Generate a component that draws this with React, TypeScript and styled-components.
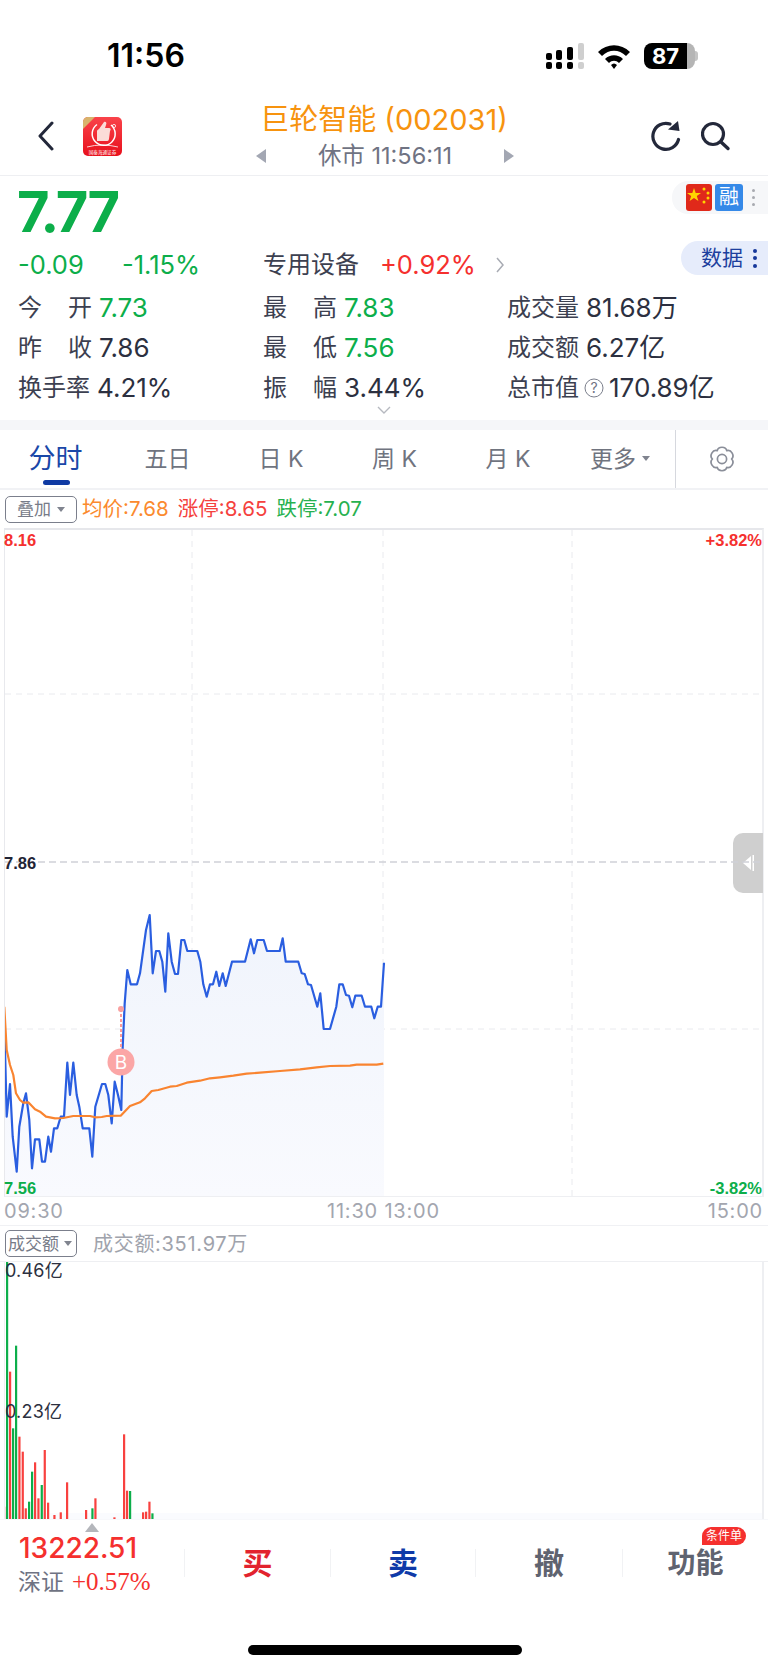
import React from "react";
import styled, { createGlobalStyle } from "styled-components";

const FONT = `"Inter", "Liberation Sans", "Noto Sans CJK SC", sans-serif`;
const UP = "#f5302e";
const DOWN = "#0cae4a";
const TEXT = "#2c3040";
const GREY = "#6f7383";

const Global = createGlobalStyle`
  html, body { margin: 0; padding: 0; background: #fff; }
  body { font-family: ${FONT}; }
`;

const Page = styled.div`
  width: 768px;
  height: 1669px;
  overflow: hidden;
  position: relative;
  background: #fff;
  display: flex;
  flex-direction: column;
`;

const StatusBar = styled.div`
  height: 97px;
  padding: 36px 73px 0 107px;
  box-sizing: border-box;
  display: flex;
  justify-content: space-between;
  align-items: flex-start;
`;
const Clock = styled.div`
  font: 600 32px/40px "Inter", sans-serif;
  color: #000;
`;
const StatusIcons = styled.div`
  display: flex;
  align-items: center;
  gap: 13px;
  height: 40px;
`;
const Battery = styled.div`
  position: relative;
  width: 51px;
  height: 26px;
  border-radius: 8px;
  background: linear-gradient(90deg, #000 84%, #b5b5b5 84%);
  color: #fff;
  font: 700 22px/26px "Inter", sans-serif;
  text-align: center;
  padding-right: 8px;
  box-sizing: border-box;
  &::after {
    content: "";
    position: absolute;
    right: -3px;
    top: 8px;
    width: 3px;
    height: 10px;
    border-radius: 0 3px 3px 0;
    background: #c4c4c4;
  }
`;

const NavBar = styled.div`
  height: 78px;
  display: grid;
  grid-template-columns: 200px 1fr 200px;
  align-items: center;
  border-bottom: 1px solid #eeeff2;
`;
const NavLeft = styled.div`
  display: flex;
  align-items: center;
  padding-left: 37px;
  gap: 28px;
`;
const NavRight = styled.div`
  display: flex;
  align-items: center;
  justify-content: flex-end;
  padding-right: 37px;
  gap: 20px;
`;
const NavCenter = styled.div`
  display: flex;
  flex-direction: column;
  align-items: center;
`;
const Title = styled.div`
  font: 400 29px/36px ${FONT};
  color: #f7930e;
  white-space: nowrap;
`;
const Session = styled.div`
  display: flex;
  align-items: center;
  gap: 52px;
  font: 400 23.5px/30px ${FONT};
  color: ${GREY};
  margin-top: 3px;
  margin-left: 2px;
`;
const Tri = styled.span<{ $dir: "l" | "r" }>`
  width: 0;
  height: 0;
  border-top: 7px solid transparent;
  border-bottom: 7px solid transparent;
  ${(p) => (p.$dir === "l" ? "border-right: 10px solid #a3a7b3;" : "border-left: 10px solid #a3a7b3;")}
`;

const Quote = styled.div`
  position: relative;
  height: 244px;
  padding: 0 0 0 18px;
  box-sizing: border-box;
`;
const Price = styled.div`
  font: 700 56px/72px ${FONT};
  letter-spacing: -2px;
  color: ${DOWN};
  height: 70px;
  margin-left: -1px;
`;
const ChangeRow = styled.div`
  display: flex;
  align-items: center;
  height: 38px;
  margin-bottom: 4px;
  font: 400 25.5px/38px ${FONT};
`;
const Val = styled.span<{ $c?: string; $w?: number }>`
  color: ${(p) => p.$c || TEXT};
  ${(p) => (p.$w ? `width: ${p.$w}px;` : "")}
  white-space: nowrap;
`;
const Sector = styled.span`
  width: 117px;
  color: #3c4050;
  font-size: 24px;
  white-space: nowrap;
`;
const Stats = styled.div`
  display: grid;
  grid-template-columns: 245px 244px 1fr;
  grid-auto-rows: 40px;
  font: 400 26px/40px ${FONT};
  color: ${TEXT};
`;
const Stat = styled.div`
  display: flex;
  align-items: center;
  gap: 7px;
  white-space: nowrap;
`;
const HelpMark = styled.svg`
  margin: 0 -2px 0 -2px;
`;
const Key = styled.span<{ $spread?: boolean }>`
  color: #3c4050;
  font-size: 24px;
  ${(p) => (p.$spread ? "width: 74px; display: flex; justify-content: space-between;" : "")}
`;
const Tags = styled.div`
  position: absolute;
  left: 672px;
  top: 5px;
  width: 96px;
  height: 33px;
  background: #f6f7f9;
  border-radius: 16px 0 0 16px;
  display: flex;
  align-items: center;
  padding-left: 14px;
  gap: 3px;
  box-sizing: border-box;
`;
const RongTag = styled.span`
  width: 28px;
  height: 27px;
  border-radius: 3px;
  background: #3589e8;
  color: #fff;
  font: 400 20px/27px ${FONT};
  text-align: center;
`;
const DotsV = styled.span<{ $c: string; $s: number; $g: number; $m: number }>`
  display: inline-flex;
  flex-direction: column;
  gap: ${(p) => p.$g}px;
  margin-left: ${(p) => p.$m}px;
  & > i {
    display: block;
    width: ${(p) => p.$s}px;
    height: ${(p) => p.$s}px;
    border-radius: 50%;
    background: ${(p) => p.$c};
  }
`;
const DataBtn = styled.div`
  position: absolute;
  left: 681px;
  top: 65px;
  width: 87px;
  height: 34px;
  background: #e6ecfb;
  border-radius: 17px 0 0 17px;
  display: flex;
  align-items: center;
  padding-left: 20px;
  gap: 3px;
  box-sizing: border-box;
  color: #1d3f9e;
  font: 400 21px/34px ${FONT};
`;
const Chevron = styled.svg`
  position: absolute;
  left: 377px;
  bottom: 6px;
`;
const Gap = styled.div`
  height: 10px;
  background: #f5f6f9;
`;
const Tabs = styled.div`
  height: 58px;
  display: flex;
  border-bottom: 2px solid #f1f2f5;
`;
const TabList = styled.div`
  width: 676px;
  border-right: 1px solid #d6d8de;
  position: relative;
  display: grid;
  grid-template-columns: 111px 113px 114px 113px 114px 110px;
  box-sizing: border-box;
`;
const Tab = styled.div<{ $on?: boolean }>`
  display: flex;
  align-items: center;
  justify-content: center;
  position: relative;
  gap: 6px;
  font: 400 ${(p) => (p.$on ? 27 : 23)}px/30px ${FONT};
  color: ${(p) => (p.$on ? "#1a47a8" : "#70747f")};
  padding-bottom: 1px;
  ${(p) =>
    p.$on
      ? `&::after { content: ""; position: absolute; left: 43px; bottom: 3px; width: 27px; height: 5px; border-radius: 3px; background: #0f3aa3; }`
      : ""}
`;
const Caret = styled.span<{ $c?: string }>`
  width: 0;
  height: 0;
  border-left: 4px solid transparent;
  border-right: 4px solid transparent;
  border-top: 5px solid ${(p) => p.$c || "#80848f"};
`;
const Settings = styled.div`
  flex: 1;
  display: flex;
  align-items: center;
  justify-content: center;
`;
const Legend = styled.div`
  height: 38px;
  display: flex;
  align-items: center;
  padding-left: 5px;
  gap: 9px;
  font: 400 20.5px/26px ${FONT};
`;
const SelectBox = styled.div<{ $pl: number; $pr: number; $g: number }>`
  height: 25px;
  border: 1px solid #7b7f8c;
  border-radius: 5px;
  padding: 0 ${(p) => p.$pr}px 0 ${(p) => p.$pl}px;
  display: flex;
  align-items: center;
  gap: ${(p) => p.$g}px;
  color: #777b88;
  font-size: 17px;
  letter-spacing: 0;
  background: #fff;
  margin-right: -4px;
`;
const LegendItem = styled.span<{ $c: string }>`
  color: ${(p) => p.$c};
  white-space: nowrap;
`;

const ChartArea = styled.div`
  position: relative;
  height: 669px;
  margin-left: 4px;
  border-left: 1px solid #e8e9ed;
  border-right: 2px solid #eeeff2;
  border-top: 2px solid #e6e7eb;
  border-bottom: 1px solid #eeeff2;
  width: 760px;
  box-sizing: border-box;
`;
const Plot = styled.svg`
  display: block;
  position: relative;
`;
const AxisLabel = styled.span<{ $c: string; $x: "l" | "r"; $y: number }>`
  position: absolute;
  ${(p) => (p.$x === "l" ? "left: -1px;" : "right: 0;")}
  top: ${(p) => p.$y}px;
  color: ${(p) => p.$c};
  font: 700 16.5px/18px "Liberation Sans", sans-serif;
`;
const Handle = styled.div`
  position: absolute;
  right: -1px;
  top: 303px;
  width: 30px;
  height: 60px;
  border-radius: 10px 0 0 10px;
  background: #cfcfcf;
  display: flex;
  align-items: center;
  justify-content: flex-start;
  padding-left: 9px;
  box-sizing: border-box;
`;
const TimeRow = styled.div`
  display: flex;
  height: 28px;
  align-items: center;
  padding: 0 5px 0 4px;
  color: #a3a6af;
  font: 400 20px/28px ${FONT};
  letter-spacing: 0.8px;
`;
const TimeLeft = styled.span`
  width: 323px;
`;
const TimeMid = styled.span`
  flex: 1;
`;
const VolHead = styled.div`
  height: 35px;
  display: flex;
  align-items: center;
  padding-left: 5px;
  gap: 20px;
  border-top: 1px solid #f0f1f4;
  border-bottom: 1px solid #eeeff2;
  font: 400 20px/26px ${FONT};
  color: #a0a3ac;
  letter-spacing: 0.7px;
`;
const VolArea = styled.div`
  position: relative;
  height: 257px;
  margin-left: 4px;
  width: 760px;
  border-left: 1px solid #eeeff2;
  border-right: 2px solid #eeeff2;
  box-sizing: border-box;
  background: linear-gradient(180deg, #fff 0, #fff 251px, #fafbfe 251px);
`;
const VolLabel = styled.span<{ $y: number }>`
  position: absolute;
  left: 0;
  top: ${(p) => p.$y}px;
  font: 400 18px/22px ${FONT};
  color: ${TEXT};
  letter-spacing: 0.2px;
`;
const BottomBar = styled.div`
  position: relative;
  flex: 1;
  background: #fff;
  border-top: 1px solid #f7f8fb;
  display: grid;
  grid-template-columns: 184px 146px 145px 147px 146px;
  align-items: start;
`;
const Index = styled.div`
  padding: 11px 0 0 18px;
  position: relative;
`;
const IndexValue = styled.div`
  font: 500 28px/34px "Inter", sans-serif;
  color: ${UP};
  margin-left: 1px;
`;
const IndexSub = styled.div`
  display: flex;
  align-items: baseline;
  gap: 8px;
  font: 400 23px/34px ${FONT};
  color: ${GREY};
`;
const IndexPct = styled.span`
  font: 400 25px/34px "Liberation Serif", serif;
  color: ${UP};
`;
const Pointer = styled.span`
  position: absolute;
  left: 85px;
  top: 3px;
  width: 0;
  height: 0;
  border-left: 7px solid transparent;
  border-right: 7px solid transparent;
  border-bottom: 9px solid #b4b6bb;
`;
const Action = styled.div<{ $c: string; $fs?: number }>`
  position: relative;
  margin-top: 29px;
  height: 28px;
  display: flex;
  align-items: center;
  justify-content: center;
  border-left: 1px solid #f1f2f4;
  color: ${(p) => p.$c};
  font: 700 ${(p) => p.$fs || 30}px/28px ${FONT};
`;
const Badge = styled.span`
  position: absolute;
  right: 22px;
  top: -22px;
  height: 18px;
  padding: 0 4px;
  border-radius: 9px 9px 9px 0;
  background: #f5302e;
  color: #fff;
  font: 400 12px/18px ${FONT};
`;
const HomeBar = styled.div`
  position: absolute;
  left: 248px;
  bottom: 14px;
  width: 274px;
  height: 10px;
  border-radius: 5px;
  background: #000;
`;

/* reference chart traces, read in a 3x crop whose origin is (0,880) of the page */
const BLUE = "14,470 20,710 30,612 38,770 50,875 58,740 70,670 78,640 88,720 96,865 105,778 118,778 126,845 135,845 145,770 153,815 162,745 172,745 182,710 192,710 202,548 210,645 220,548 230,645 238,680 248,745 268,745 277,830 286,680 306,612 316,612 325,645 335,730 344,605 354,645 364,690 368,500 374,370 382,270 392,313 411,313 420,280 438,150 449,105 458,280 468,213 478,213 487,245 496,335 505,160 515,245 525,282 534,282 544,180 553,180 562,213 592,213 601,245 610,313 620,350 630,313 639,313 649,275 658,318 668,280 677,318 696,245 735,245 752,178 762,220 772,180 791,180 801,213 839,213 848,175 857,245 895,245 905,280 914,282 924,313 933,315 952,380 961,340 971,447 990,447 1009,380 1018,313 1028,313 1038,345 1047,347 1057,382 1066,347 1085,347 1095,380 1114,380 1123,415 1133,380 1143,380 1152,248";
const ORANGE = "13,380 20,510 30,555 40,585 48,640 60,660 70,668 85,667 105,688 120,695 138,710 165,715 190,714 220,708 270,708 285,712 305,711 320,708 362,707 390,678 420,667 435,655 455,633 475,630 510,620 530,618 560,608 600,602 630,595 660,592 700,587 740,581 780,578 840,573 900,568 950,562 990,558 1050,557 1070,554 1130,554 1150,551";

const CHART_TOP = 530;
const CHART_LEFT = 5;
const toPts = (s: string) =>
  s
    .split(" ")
    .map((p) => {
      const [x, y] = p.split(",").map(Number);
      return `${(x / 3 - CHART_LEFT).toFixed(1)},${(880 + y / 3 - CHART_TOP).toFixed(1)}`;
    })
    .join(" ");

type Bar = [number, number, "r" | "g"];
const BARS: Bar[] = [
  [12, 920, "r"], [21, 183, "g"], [30, 515, "r"], [39, 685, "g"], [48, 437, "g"], [58, 710, "r"],
  [68, 755, "r"], [77, 925, "r"], [87, 905, "g"], [96, 815, "g"], [105, 787, "r"], [115, 895, "r"],
  [125, 855, "g"], [134, 750, "r"], [144, 908, "r"], [163, 945, "r"], [182, 937, "r"], [201, 847, "r"],
  [258, 930, "r"], [277, 925, "g"], [286, 895, "r"], [343, 952, "r"], [372, 703, "r"], [381, 872, "r"],
  [390, 873, "g"], [429, 937, "r"], [438, 935, "r"], [448, 905, "r"], [457, 940, "g"],
];

const gearPath = (() => {
  const c = 13;
  const pt = (deg: number, r: number) => {
    const a = (deg * Math.PI) / 180;
    return `${(c + r * Math.cos(a)).toFixed(2)} ${(c + r * Math.sin(a)).toFixed(2)}`;
  };
  let d = `M${pt(-120, 9.6)}`;
  for (let i = 0; i < 6; i++) {
    const lobe = -90 + i * 60;
    d += ` C${pt(lobe - 16, 13.4)} ${pt(lobe + 16, 13.4)} ${pt(lobe + 30, 9.6)}`;
  }
  return d + "z";
})();

const ThumbLogo = () => (
  <svg width="39" height="39" viewBox="0 0 39 39">
    <defs>
      <linearGradient id="lg" x1="0" y1="0" x2="0" y2="1">
        <stop offset="0" stopColor="#f9434a" />
        <stop offset="1" stopColor="#e8101c" />
      </linearGradient>
    </defs>
    <rect width="39" height="39" rx="5" fill="url(#lg)" />
    <path d="M0 12 V5 a5 5 0 0 1 5-5 H12z" fill="#d9b36c" />
    <path d="M14 7.5 A11.5 11.5 0 1 0 28 8" fill="none" stroke="#fff" strokeWidth="1.5" />
    <path d="M14 24 V14 c0-1 1-1 2-2 l5-7 c2-1 3 1 2 3 l-1 3 h4 c2 0 2 2 1 3 l-1 8 c-.5 2-1 2-3 2z" fill="#fbdcd8" />
    <circle cx="31" cy="9" r="1.6" fill="none" stroke="#fff" strokeWidth="0.8" />
    <path d="M4 30 Q19 26 35 30" fill="none" stroke="#fff" strokeWidth=".8" />
    <text x="19.5" y="36.5" textAnchor="middle" fontSize="4.6" fill="#fff" fontFamily="Noto Sans CJK SC">国泰海通证券</text>
  </svg>
);

const Flag = () => (
  <svg width="26" height="27" viewBox="0 0 26 27">
    <rect width="26" height="27" rx="3" fill="#e0291a" />
    <polygon points="8,4 9.7,9 15,9 10.8,12 12.4,17 8,14 3.6,17 5.2,12 1,9 6.3,9" fill="#ffd500" />
    <circle cx="18" cy="5" r="1.5" fill="#ffd500" />
    <circle cx="22" cy="9" r="1.5" fill="#ffd500" />
    <circle cx="22" cy="14" r="1.5" fill="#ffd500" />
    <circle cx="18" cy="18" r="1.5" fill="#ffd500" />
  </svg>
);

const Dots = ({ c, s, g, m }: { c: string; s: number; g: number; m: number }) => (
  <DotsV $c={c} $s={s} $g={g} $m={m}>
    <i />
    <i />
    <i />
  </DotsV>
);

export default function App() {
  return (
    <Page>
      <Global />
      <StatusBar>
        <Clock>11:56</Clock>
        <StatusIcons>
          <svg width="38" height="26" viewBox="0 0 38 26">
            <g fill="#000">
              <rect x="0" y="10" width="6" height="7" rx="2" />
              <rect x="0" y="19" width="6" height="7" rx="2" />
              <rect x="10" y="7" width="6" height="10" rx="2" />
              <rect x="10" y="19" width="6" height="7" rx="2" />
              <rect x="21" y="4" width="6" height="13" rx="2" />
              <rect x="21" y="19" width="6" height="7" rx="2" />
            </g>
            <g fill="#cfcfcf">
              <rect x="32" y="0" width="6" height="17" rx="2" />
              <rect x="32" y="19" width="6" height="7" rx="2" />
            </g>
          </svg>
          <svg width="34" height="26" viewBox="0 0 34 26">
            <path d="M1 9 C10 0 24 0 33 9 L29 13 C22 6 12 6 5 13z M8 16 C13 11 21 11 26 16 L22 20 C19 17 15 17 12 20z M14 22 C16 20 18 20 20 22 L17 26z" fill="#000" />
          </svg>
          <Battery>87</Battery>
        </StatusIcons>
      </StatusBar>

      <NavBar>
        <NavLeft>
          <svg width="18" height="30" viewBox="0 0 18 30">
            <path d="M15 2 L3 15 L15 28" fill="none" stroke="#23283a" strokeWidth="3" strokeLinecap="round" strokeLinejoin="round" />
          </svg>
          <ThumbLogo />
        </NavLeft>
        <NavCenter>
          <Title>巨轮智能 (002031)</Title>
          <Session>
            <Tri $dir="l" />
            <span>休市 11:56:11</span>
            <Tri $dir="r" />
          </Session>
        </NavCenter>
        <NavRight>
          <svg width="30" height="30" viewBox="0 0 30 30">
            <path d="M27.5 18.5 A13 13 0 1 1 19 3" fill="none" stroke="#23283a" strokeWidth="3.2" strokeLinecap="round" />
            <path d="M17 8.5 L28.5 10 L27 0z" fill="#23283a" />
          </svg>
          <svg width="30" height="30" viewBox="0 0 30 30">
            <circle cx="12" cy="13" r="10.5" fill="none" stroke="#23283a" strokeWidth="3.2" />
            <path d="M20 21 L27 27.5" stroke="#23283a" strokeWidth="3.4" strokeLinecap="round" />
          </svg>
        </NavRight>
      </NavBar>

      <Quote>
        <Price>7.77</Price>
        <ChangeRow>
          <Val $c={DOWN} $w={104}>-0.09</Val>
          <Val $c={DOWN} $w={141}>-1.15%</Val>
          <Sector>专用设备</Sector>
          <Val $c={UP} $w={115}>+0.92%</Val>
          <svg width="10" height="18" viewBox="0 0 10 18">
            <path d="M2 2 L8 9 L2 16" fill="none" stroke="#a8abb3" strokeWidth="1.5" />
          </svg>
        </ChangeRow>
        <Stats>
          <Stat><Key $spread><span>今</span><span>开</span></Key><Val $c={DOWN}>7.73</Val></Stat>
          <Stat><Key $spread><span>最</span><span>高</span></Key><Val $c={DOWN}>7.83</Val></Stat>
          <Stat><Key>成交量</Key><Val>81.68万</Val></Stat>
          <Stat><Key $spread><span>昨</span><span>收</span></Key><Val>7.86</Val></Stat>
          <Stat><Key $spread><span>最</span><span>低</span></Key><Val $c={DOWN}>7.56</Val></Stat>
          <Stat><Key>成交额</Key><Val>6.27亿</Val></Stat>
          <Stat><Key>换手率</Key><Val>4.21%</Val></Stat>
          <Stat><Key $spread><span>振</span><span>幅</span></Key><Val>3.44%</Val></Stat>
          <Stat>
            <Key>总市值</Key>
            <HelpMark width="20" height="20" viewBox="0 0 20 20">
              <circle cx="10" cy="10" r="9" fill="none" stroke="#7b7f8c" strokeWidth="1" />
              <text x="10" y="15" textAnchor="middle" fontSize="14" fill="#6f7383" fontFamily="Inter">?</text>
            </HelpMark>
            <Val>170.89亿</Val>
          </Stat>
        </Stats>
        <Tags>
          <Flag />
          <RongTag>融</RongTag>
          <Dots c="#a8aab0" s={3} g={4} m={6} />
        </Tags>
        <DataBtn>
          数据
          <Dots c="#17389a" s={4} g={3.5} m={7} />
        </DataBtn>
        <Chevron width="14" height="8" viewBox="0 0 14 8">
          <path d="M1 1 L7 7 L13 1" fill="none" stroke="#b6b9c0" strokeWidth="1.4" />
        </Chevron>
      </Quote>
      <Gap />

      <Tabs>
        <TabList>
          <Tab $on>分时</Tab>
          <Tab>五日</Tab>
          <Tab>日 K</Tab>
          <Tab>周 K</Tab>
          <Tab>月 K</Tab>
          <Tab>更多<Caret /></Tab>
        </TabList>
        <Settings>
          <svg width="26" height="26" viewBox="0 0 26 26">
            <path d={gearPath} fill="none" stroke="#8a8e99" strokeWidth="1.7" strokeLinejoin="round" />
            <circle cx="13" cy="13" r="4.6" fill="none" stroke="#8a8e99" strokeWidth="1.7" />
          </svg>
        </Settings>
      </Tabs>

      <Legend>
        <SelectBox $pl={11} $pr={11} $g={6}>叠加<Caret /></SelectBox>
        <LegendItem $c="#fb8a2e">均价:7.68</LegendItem>
        <LegendItem $c="#f5413d">涨停:8.65</LegendItem>
        <LegendItem $c="#27b14f">跌停:7.07</LegendItem>
      </Legend>

      <ChartArea>
        <Handle>
          <svg width="12" height="16" viewBox="0 0 12 16">
            <path d="M9 1 L1 8 L9 15z" fill="#fff" />
            <rect x="10.5" y="0" width="1.5" height="16" fill="#fff" />
          </svg>
        </Handle>
        <Plot width="757" height="666" viewBox="0 0 757 666">
          <defs>
            <linearGradient id="area" x1="0" y1="0" x2="0" y2="1">
              <stop offset="0" stopColor="#f0f4fc" />
              <stop offset="1" stopColor="#f9fafe" />
            </linearGradient>
          </defs>
          <g stroke="#e9eaee" strokeWidth="1" strokeDasharray="6 5">
            <line x1="187" y1="0" x2="187" y2="666" />
            <line x1="378" y1="0" x2="378" y2="666" />
            <line x1="567" y1="0" x2="567" y2="666" />
            <line x1="0" y1="164" x2="757" y2="164" />
            <line x1="0" y1="499" x2="757" y2="499" />
          </g>
          <line x1="0" y1="332" x2="757" y2="332" stroke="#cfd1d8" strokeWidth="1.6" strokeDasharray="7 4" />
          <polygon points={`0,${(880 + 470 / 3 - CHART_TOP).toFixed(1)} ${toPts(BLUE)} ${(1152 / 3 - CHART_LEFT).toFixed(1)},666 0,666`} fill="url(#area)" />
          <polyline points={toPts(BLUE)} fill="none" stroke="#2a5ee0" strokeWidth="2.2" strokeLinejoin="round" />
          <polyline points={toPts(ORANGE)} fill="none" stroke="#f98430" strokeWidth="2.2" strokeLinejoin="round" />
          <line x1="116" y1="479" x2="116" y2="530" stroke="#f99" strokeWidth="2" strokeDasharray="3 2" />
          <circle cx="116" cy="479" r="3" fill="#f9a0a0" />
          <circle cx="116" cy="532" r="13.5" fill="#fba6a6" />
          <text x="116" y="539" textAnchor="middle" fontSize="19" fill="#fff" fontFamily="Inter">B</text>
        </Plot>
        <AxisLabel $c={UP} $x="l" $y={1}>8.16</AxisLabel>
        <AxisLabel $c={UP} $x="r" $y={1}>+3.82%</AxisLabel>
        <AxisLabel $c="#1f2435" $x="l" $y={324}>7.86</AxisLabel>
        <AxisLabel $c={DOWN} $x="l" $y={649}>7.56</AxisLabel>
        <AxisLabel $c={DOWN} $x="r" $y={649}>-3.82%</AxisLabel>
      </ChartArea>

      <TimeRow>
        <TimeLeft>09:30</TimeLeft>
        <TimeMid>11:30 13:00</TimeMid>
        <span>15:00</span>
      </TimeRow>
      <VolHead>
        <SelectBox $pl={2} $pr={4} $g={5}>成交额<Caret /></SelectBox>
        <span>成交额:351.97万</span>
      </VolHead>
      <VolArea>
        <Plot width="757" height="257" viewBox="0 0 757 257">
          {BARS.map(([x, t, k], i) => {
            const top = 1200 + t / 3 - 1262;
            return (
              <rect
                key={i}
                x={x / 3 - 6}
                y={top}
                width={2.2}
                height={257 - top}
                fill={k === "r" ? "#f8413f" : "#0cae4a"}
              />
            );
          })}
        </Plot>
        <VolLabel $y={-2}>0.46亿</VolLabel>
        <VolLabel $y={139}>0.23亿</VolLabel>
      </VolArea>

      <BottomBar>
        <Index>
          <Pointer />
          <IndexValue>13222.51</IndexValue>
          <IndexSub>
            深证<IndexPct>+0.57%</IndexPct>
          </IndexSub>
        </Index>
        <Action $c="#e2232e">买</Action>
        <Action $c="#0f3aa8">卖</Action>
        <Action $c="#5f6370">撤</Action>
        <Action $c="#5f6370" $fs={28}>
          功能
          <Badge>条件单</Badge>
        </Action>
        <HomeBar />
      </BottomBar>
    </Page>
  );
}
